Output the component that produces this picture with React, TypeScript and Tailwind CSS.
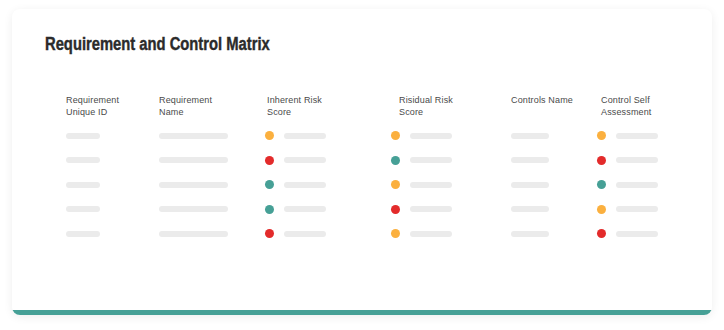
const orange = "bg-[#fbb03f]";
const red = "bg-[#e32b2b]";
const teal = "bg-[#46a096]";

const rows = [
  [orange, orange, orange],
  [red, teal, red],
  [teal, orange, teal],
  [teal, red, orange],
  [red, orange, red],
];

function Bar({ w }: { w: string }) {
  return <div className={`h-[6px] rounded-full bg-[#ebebeb] ${w}`} />;
}

function DotBar({ color }: { color: string }) {
  return (
    <div className="flex items-center">
      <div className={`h-[9px] w-[9px] rounded-full ${color}`} />
      <div className="ml-[10px] h-[6px] w-[42px] rounded-full bg-[#ebebeb]" />
    </div>
  );
}

export default function App() {
  return (
    <div className="h-[330px] w-[724px] bg-white pl-[12px] pt-[9px]" style={{ fontFamily: '"Liberation Sans", Arial, sans-serif' }}>
      <div className="flex h-[306px] w-[700px] flex-col overflow-hidden rounded-[8px] bg-white shadow-[0_2px_10px_rgba(0,0,0,0.07)]">
        <div className="flex-1 pl-[33px] pt-[24px]">
          <h1 className="inline-block origin-left scale-x-[0.82] whitespace-nowrap text-[18px] font-bold leading-[22px] text-[#2b2b2b] [-webkit-text-stroke:0.4px_#2b2b2b]">
            Requirement and Control Matrix
          </h1>
          <div className="ml-[21px] mt-[37px] grid grid-cols-[93px_106px_126px_120px_86px_1fr] text-[9px] leading-[12px] tracking-[0.15px] text-[#4a4a4a]">
            <div>Requirement<br />Unique ID</div>
            <div>Requirement<br />Name</div>
            <div className="pl-[2px]">Inherent Risk<br />Score</div>
            <div className="pl-[8px]">Risidual Risk<br />Score</div>
            <div>Controls Name</div>
            <div className="pl-[4px]">Control Self<br />Assessment</div>
          </div>
          <div className="ml-[21px] mt-[13px] flex flex-col gap-[15.5px]">
            {rows.map((r, i) => (
              <div key={i} className="grid h-[9px] grid-cols-[93px_106px_126px_120px_86px_1fr] items-center">
                <Bar w="w-[34px]" />
                <Bar w="w-[69px]" />
                <DotBar color={r[0]} />
                <DotBar color={r[1]} />
                <Bar w="w-[38px]" />
                <DotBar color={r[2]} />
              </div>
            ))}
          </div>
        </div>
        <div className="h-[5px] bg-[#46a096]" />
      </div>
    </div>
  );
}
